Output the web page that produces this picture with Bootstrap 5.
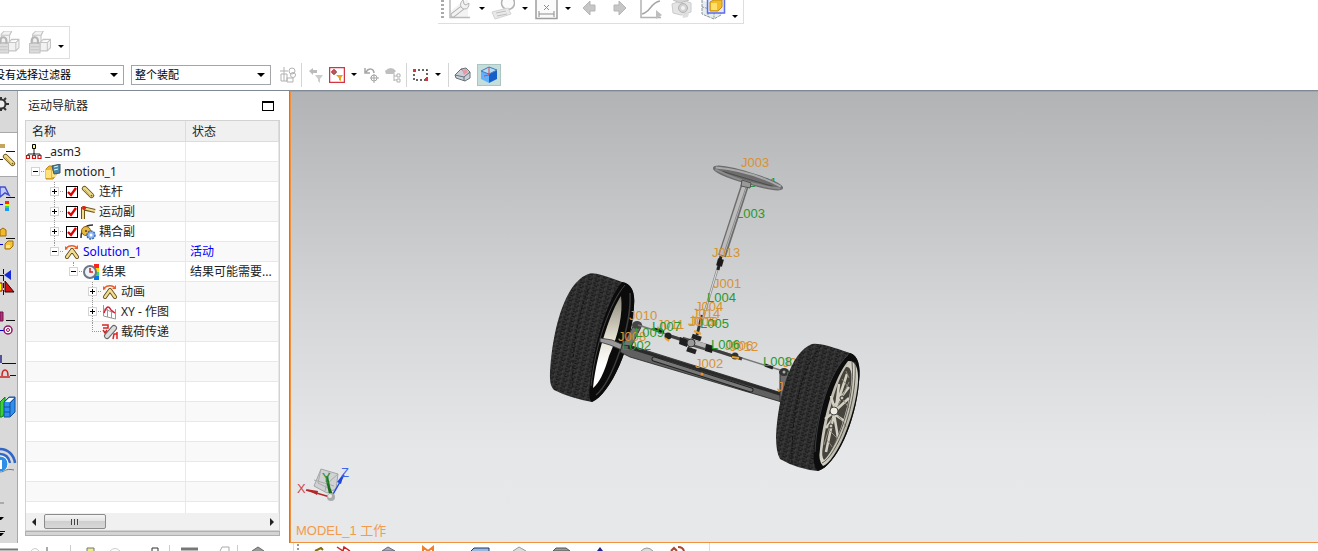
<!DOCTYPE html>
<html lang="zh-CN">
<head>
<meta charset="utf-8">
<meta name="viewport" content="width=device-width, initial-scale=1">
<title>运动导航器</title>
<link rel="stylesheet" href="https://cdn.jsdelivr.net/npm/bootstrap@5.3.0/dist/css/bootstrap.min.css">
<style>
body{font:12px/18px "Noto Sans","Noto Sans CJK SC",sans-serif;color:#1e1e1e;background:#fff}
svg{display:block;flex:none}
button{border:0;padding:0;background:none;color:inherit;flex:none}
.tbtn{width:26px;height:24px;display:flex;justify-content:center;align-items:flex-start}
.dim{opacity:.75}
.drop{width:17px;height:16px;display:flex;align-items:center;justify-content:center}
.drop::after{content:"";border:3px solid transparent;border-top:3px solid #000;border-bottom:0}
.topbar{height:24px;width:306px;margin-left:438px;border:solid #dedede;border-width:0 1px 1px 0}
.runset{gap:5px}
.grip{width:10px;height:20px;padding-left:3px}
.grip::before{content:"";display:block;height:20px;width:3px;background:repeating-linear-gradient(#aaa 0 2px,#fff 2px 4px)}
.assybar{width:70px;height:33px;margin-top:2px;border:solid #dedede;border-width:1px 1px 1px 0}
.selbar{height:31px}
.selbar .form-select{font:inherit;font-size:11px;line-height:18px;height:20px;padding:0 20px 0 3px;border:1px solid #a3a5ab;border-radius:0;color:#000;background-position:right 5px center;background-size:8px 4px;background-image:url("data:image/svg+xml,%3Csvg xmlns='http://www.w3.org/2000/svg' viewBox='0 0 8 4'%3E%3Cpath d='M0 0h8L4 4z'/%3E%3C/svg%3E")}
.selbar .filter{width:142px;margin-left:-18px;margin-right:7px;padding-left:11px}
.scope{width:140px;margin-right:6px}
.sbtn{width:21px;height:22px;display:flex;align-items:center;justify-content:center}
.sbtn.on{width:24px;background:#c6dedb;border:1px solid #a9c6c2}
.selbar .drop{width:14px}
.vsep{width:7px;height:24px;padding-left:3px;flex:none}
.vsep::before{content:"";display:block;width:1px;height:24px;background:#d5d5d5}
.workarea{border-top:1px solid #7f8995;min-height:0}
.rail{width:18px;background:#d9d9d9;border-right:1px solid #a8a8a8;overflow:hidden}
.rail button{height:42px;display:flex;align-items:center}
.rail .first{height:41px;align-items:flex-start;padding-top:5px}
.rail .now{height:45px;width:18px;background:#fff;border:solid #a8a8a8;border-width:1px 0}
.rail .tall{height:62px}
.navpane{width:272px;padding:0 10px 7px 7px}
.ntitle{height:29px;padding:1px 6px 0 3px}
.winbox{width:12px;height:10px;border:1px solid #000;border-top-width:2px}
.tree{border:1px solid #d2d2d2;min-height:0;overflow:hidden}
.tree table{table-layout:fixed;width:100%;border-collapse:separate;border-spacing:0;line-height:18px}
.tree th{height:21px;background:#f0f0f0;font-weight:400;padding:1px 6px 0;border:solid #dcdcdc;border-width:0 1px 1px 0}
.tree td{height:20px;padding:0 4px;border:solid #e8e8e8;border-width:0 1px 1px 0;white-space:nowrap;overflow:hidden}
.tree td:first-child{padding:0}
.tree tr:nth-child(even) td{background:#f9f9f9}
.node{display:flex;align-items:center;height:19px}
.node svg{margin-right:3px}
.joint{width:19px;height:19px;position:relative;display:flex;align-items:center;justify-content:center;flex:none}
.joint::before{content:"";position:absolute;left:9px;top:0;bottom:0;border-left:1px dotted #999}
.joint.end::before{bottom:9px}
.joint.root::before{display:none}
.joint::after{content:"";position:absolute;left:9px;right:1px;top:9px;border-top:1px dotted #999}
.l1{margin-left:19px}.l2{margin-left:38px}.l3{margin-left:57px}
.tog{width:9px;height:9px;border:1px solid #d4d4d4;position:relative;z-index:1;background:linear-gradient(#000,#000) center/5px 1px no-repeat,#fff}
.tog.plus{background:linear-gradient(#000,#000) center/5px 1px no-repeat,linear-gradient(#000,#000) center/1px 5px no-repeat,#fff}
.node .form-check-input{width:12px;height:12px;margin:0 2px;border:1px solid #000;border-radius:0;background-color:#fff;flex:none;background-size:12px}
.node .form-check-input:checked{background-image:url("data:image/svg+xml,%3Csvg xmlns='http://www.w3.org/2000/svg' viewBox='0 0 12 12'%3E%3Cpath d='M2 6l3 3 5-7' fill='none' stroke='%23e00000' stroke-width='2.4'/%3E%3C/svg%3E")}
.live{color:#00f}
.hscroll{height:17px;background:#f0f0f0;flex:none;padding:0 5px 0 6px}
.thumb{width:62px;height:15px;margin-left:8px;border:1px solid #8b8b8b;border-radius:2px;background:linear-gradient(#f5f5f5,#e2e2e2 50%,#cfcfcf 50%,#d8d8d8);display:flex;justify-content:center;align-items:center}
.thumb::before{content:"";width:8px;height:6px;background:repeating-linear-gradient(90deg,#444 0 1px,#ddd 1px 3px)}
.larr,.rarr{width:4px;height:8px;border:4px solid transparent;border-right-color:#222;border-left:0}
.rarr{border:4px solid transparent;border-left-color:#222;border-right:0}
.splitbar{height:5px;background:#d4d4d4;border:1px solid #b0b0b0;flex:none}
.scene{min-width:0;border:1px solid #f2913d;border-right:0;box-shadow:-1px 0 #7f8995;background:linear-gradient(#b2b3b5,#d5d7d8 50%,#e5e7e9 80%,#e6e8ea)}
.scene svg{width:100%;height:100%}
.scene text{font-family:"Liberation Sans","Noto Sans CJK SC",sans-serif;font-size:13px}
.jt{fill:#d8922f}.lk{fill:#279a2c}.ttl{fill:#f49a4b}
.lowbar{height:8px;overflow:hidden;flex:none}
.lowleft{width:294px;border-right:1px solid #dedede}
.lowright{width:416px;border-right:1px solid #dedede}
</style>
<script src="https://cdn.jsdelivr.net/npm/bootstrap@5.3.0/dist/js/bootstrap.bundle.min.js"></script>
</head>
<body class="vh-100 d-flex flex-column overflow-hidden">
<svg width="0" height="0" class="position-absolute" aria-hidden="true">
 <defs>
  <symbol id="cubes" viewBox="1 0 22 22"><g stroke="#c4c4c4" fill="#f2f2f2"><path d="M5 3l3-3h7l-2 4v7H5z"/><path d="M5 4h8l2-4M12 11l3-3h7v8l-3 3h-7zM12 11h7l3-3M19 11v8"/><path d="M2 12h10v9H2z" fill="#dcdcdc"/><path d="M4 12V9a3 3 0 0 1 6 0v3" fill="none" stroke="#b4b4b4" stroke-width="2"/><path d="M3 15h8M3 18h8"/></g></symbol>
  <symbol id="rod" viewBox="0 0 16 16"><path d="M4 4l8 8" stroke="#6b5216" stroke-width="6" stroke-linecap="round"/><path d="M4 4l8 8" stroke="#eddc8e" stroke-width="4" stroke-linecap="round"/><path d="M4 5l6 7" stroke="#b79537"/><circle cx="12" cy="12" r="1" fill="#7a5d1a"/></symbol>
  <symbol id="arm" viewBox="0 0 16 16"><path d="M3 13l5-7M8 6l5 7" stroke="#5d4712" stroke-width="4" stroke-linecap="round"/><path d="M3 13l5-7M8 6l5 7" stroke="#f0dc92" stroke-width="2.400" stroke-linecap="round"/><path d="M2 4Q7 0 12 3" fill="none" stroke="#ee5a28" stroke-width="1.500"/><path d="M14 1v4h-4zM1 2v4l3-1z" fill="#ee5a28"/></symbol>
 </defs>
</svg>

<header class="flex-shrink-0">
 <div class="topbar d-flex" role="toolbar" aria-label="运动">
  <span class="grip"></span>
  <button class="tbtn dim" aria-label="环境"><svg width="22" height="20"><path d="M2 11l8-7 9-5v18H2z" fill="#f0f0f0"/><path d="M1 0v17.500h20" fill="none" stroke="#a5a5a5" stroke-width="1.500"/><path d="M4 15l9-7" stroke="#999" stroke-width="5" stroke-linecap="round"/><path d="M4 15l9-7" stroke="#eee" stroke-width="3" stroke-linecap="round"/><path d="M14 0c-4 3-3 9 2 9q4 0 4-6l-3 2-2-1z" fill="#eee" stroke="#999"/></svg></button>
  <button class="drop" aria-label="更多"></button>
  <button class="tbtn dim" aria-label="标记"><svg width="24" height="20"><circle cx="17" cy="3" r="6.500" fill="#fafafa" stroke="#999" stroke-width="1.500"/><path d="M1 12l16-4 3 6-16 5z" fill="#e2e2e2" stroke="#c4c4c4"/><path d="M5 13l10-2M6 16l10-2" stroke="#aaa"/></svg></button>
  <button class="drop" aria-label="更多"></button>
  <button class="tbtn" aria-label="测量"><svg width="23" height="20"><path d="M1 0v18.500h21V0" fill="#fafafa" stroke="#9d9d9d" stroke-width="1.500"/><path d="M4 14h15M4 11v6M19 11v6M9 5l5 5M14 5l-5 5" stroke="#8d8d8d"/></svg></button>
  <button class="drop" aria-label="更多"></button>
  <span class="d-flex runset">
  <button class="tbtn" aria-label="后退"><svg width="14" height="16"><path d="M1 8l7-7v4h5v6H8v4z" fill="#c6c6c6" stroke="#b5b5b5"/></svg></button>
  <button class="tbtn" aria-label="前进"><svg width="14" height="16"><path d="M13 8L6 1v4H1v6h5v4z" fill="#c6c6c6" stroke="#b5b5b5"/></svg></button>
  <button class="tbtn dim" aria-label="图表"><svg width="23" height="20"><path d="M1 0v17.500h20" fill="none" stroke="#999" stroke-width="1.500"/><path d="M2 14C11 12 10 3 20 1" fill="none" stroke="#888" stroke-width="1.500"/><path d="M16 10l6 5-6 4z" fill="#aaa"/></svg></button>
  <button class="tbtn dim" aria-label="照相"><svg width="22" height="20"><path d="M1 4l11-4 8 3v9l-10 3-8-2z" fill="#dcdcdc" stroke="#bbb"/><path d="M2 0l7 3 9-3" fill="#c9c9c9" stroke="#aaa"/><circle cx="12" cy="8" r="4.500" fill="#c4c4c4" stroke="#999"/><circle cx="12" cy="8" r="2" fill="#eee"/><path d="M11 14l7-1-1 4-5 1z" fill="#d5d5d5"/></svg></button>
  <button class="tbtn" aria-label="显示部件"><svg width="25" height="21"><path d="M1 0v14l12 5 7-4V8" fill="#e6edef" stroke="#8b979b" stroke-dasharray="3 1"/><path d="M1 7l12 3v9M7 4v13" fill="none" stroke="#8b979b" stroke-dasharray="2 1"/><path d="M6.500 0v13h17V0" fill="#e4e8f8" stroke="#5b6ee8" stroke-width="1.500"/><path d="M9 2l4-2h8v7l-4 4H9z" fill="#f3bc2b" stroke="#c58b0f"/><path d="M10 3h6v7h-6z" fill="#ffe06a"/></svg></button>
  </span>
  <button class="drop mt-1 pt-2" aria-label="更多"></button>
 </div>
 <div class="assybar d-flex align-items-center" role="toolbar" aria-label="装配">
  <button aria-label="约束"><svg width="20" height="23" viewBox="3 0 20 23"><use href="#cubes" width="23" height="23"/></svg></button>
  <button class="ms-2" aria-label="解除约束"><svg width="24" height="23"><use href="#cubes" width="24" height="23"/></svg></button>
  <button class="drop mt-2" aria-label="更多"></button>
 </div>
 <div class="selbar d-flex align-items-center" role="toolbar" aria-label="选择">
  <select class="form-select filter flex-shrink-0" aria-label="选择过滤器"><option>没有选择过滤器</option></select>
  <select class="form-select scope flex-shrink-0" aria-label="选择范围"><option>整个装配</option></select>
  <button class="sbtn dim" aria-label="定向"><svg width="18" height="18" fill="none" stroke="#999"><path d="M2 8h6v7H2zM5 1v14M1 5h8M8 12h6v4H8z"/><circle cx="13" cy="5" r="3"/><circle cx="14" cy="9" r="2.500"/></svg></button>
  <span class="vsep"></span>
  <button class="sbtn" aria-label="重置过滤"><svg width="16" height="16"><path d="M1 4l4-3v2h4v3H5v2z" fill="#bbb"/><path d="M7 8h8l-3 4v4l-2-2v-2z" fill="#ccc"/></svg></button>
  <button class="sbtn" aria-label="点过滤"><svg width="16" height="16"><path d="M.5.5h15v15H.5z" fill="#fff" stroke="#d23345" stroke-width="1.500"/><circle cx="5" cy="5" r="2" fill="none" stroke="#c22"/><path d="M5 2v6M2 5h6" stroke="#833"/><path d="M7 8h7l-2 3v3l-2-1v-2z" fill="#e9a51a"/></svg></button>
  <button class="drop" aria-label="更多"></button>
  <button class="sbtn dim" aria-label="撤消"><svg width="16" height="16" fill="none" stroke="#888"><path d="M2 5c3-5 8-3 8 1M1 1v5h5" stroke-width="1.500"/><circle cx="10" cy="11" r="3"/><path d="M10 7v9M6 11h9"/></svg></button>
  <button class="sbtn dim" aria-label="查找"><svg width="18" height="16"><path d="M1 4q6-6 11 0l-3 3H2z" fill="#aaa"/><path d="M10 6v8M10 9h3M10 13h3M13 7h3v3h-3zM13 12h3v3h-3z" fill="none" stroke="#999"/></svg></button>
  <span class="vsep"></span>
  <button class="sbtn" aria-label="矩形选择"><svg width="17" height="14"><path d="M2 2h13v10H2z" fill="none" stroke="#333" stroke-dasharray="2 2" stroke-width="1.500"/><path d="M1 1h3v3H1zM13 10h3v3h-3z" fill="#d33"/></svg></button>
  <button class="drop" aria-label="更多"></button>
  <span class="vsep"></span>
  <button class="sbtn" aria-label="着色"><svg width="17" height="15"><path d="M1 8l6-6 5-1 4 4v6l-5 3-9-3z" fill="#c9d0d8" stroke="#66707c"/><path d="M1 8l9 2 6-5M10 10v4M7 2l4 3" fill="none" stroke="#66707c"/><path d="M8 3l4-1 2 3-4 3z" fill="#e59aa2"/></svg></button>
  <button class="sbtn on ms-1" aria-label="立方体视图" aria-pressed="true"><svg width="18" height="18"><path d="M1 5l8 3v9l-8-4z" fill="#5fb0ff"/><path d="M9 8l8-4v9l-8 4z" fill="#1560c8"/><path d="M1 5l8-4 8 3-8 4z" fill="#b5dbf8" stroke="#3e79b9"/><path d="M9 1v8M9 9l-5 1" stroke="#e04444"/></svg></button>
 </div>
</header>

<main class="workarea flex-grow-1 d-flex">
 <nav class="rail flex-shrink-0 d-flex flex-column align-items-start" aria-label="资源条">
  <button class="first" aria-label="设置"><svg width="10" height="16"><circle cx="1" cy="8" r="4.500" fill="#eee" stroke="#333" stroke-width="2"/><path d="M4 4l2-2M6 8h3M4 12l2 2M1 1v3M1 12v3" stroke="#333" stroke-width="2"/></svg></button>
  <button class="now" aria-label="运动导航器"><svg width="17" height="26"><path d="M0 3h5M0 5h5" stroke="#b28828" stroke-width="1.500"/><path d="M6 9.500h9" stroke="#111"/><path d="M0 17.500h3" stroke="#00c"/><use href="#rod" x="2" y="11" width="14" height="14"/></svg></button>
  <button aria-label="部件"><svg width="17" height="28"><path d="M0 3h5l4 8-4-2-5 4z" fill="#c3cbf7" stroke="#4450d0" stroke-width="1.500"/><path d="M6 13.500h9" stroke="#111"/><path d="M0 20.500h3" stroke="#00c"/><path d="M5 17h4v3H5z" fill="#f22"/><path d="M5 20h4v2H5z" fill="#fe0"/><path d="M5 22h4v2H5z" fill="#3d3"/><path d="M5 24h4v3H5z" fill="#19f"/></svg></button>
  <button aria-label="装配"><svg width="17" height="28"><path d="M0 4l3-2 3 2v6H0z" fill="#f3b92a" stroke="#9b6c08"/><path d="M6 12.500h9" stroke="#111"/><path d="M0 18.500h3" stroke="#00c"/><path d="M5 18l3-3h5v5l-3 3H5z" fill="#f6c23a" stroke="#9b6c08"/><path d="M6 19h4v3H6z" fill="#ffe584"/></svg></button>
  <button aria-label="约束"><svg width="17" height="26"><path d="M3.500 0v26" stroke="#111" stroke-dasharray="5 2"/><path d="M0 6.500h4" stroke="#00c"/><path d="M4 6l7-5v10z" fill="#1529d8"/><path d="M-1 14h3v8h-3z" fill="#ff0" stroke="#a00"/><path d="M5 12v11h9z" fill="#d51212" stroke="#300"/></svg></button>
  <button aria-label="重用"><svg width="17" height="28"><path d="M0 2h3v9H0z" fill="#b72f7e" stroke="#701347"/><path d="M6 10.500h9" stroke="#111"/><path d="M0 20.500h4" stroke="#00c"/><circle cx="8" cy="20" r="4" fill="#fff" stroke="#8f1260" stroke-width="1.500"/><circle cx="8" cy="20" r="1.500" fill="none" stroke="#8f1260"/></svg></button>
  <button aria-label="仿真"><svg width="17" height="28"><path d="M1 3v8" stroke="#53539a" stroke-width="2"/><path d="M2 11.500h14M10 23.500h6" stroke="#111"/><path d="M0 25h10M2 24c0-8 6-8 6 0" stroke="#c22" fill="none" stroke-width="1.500"/></svg></button>
  <button aria-label="书库"><svg width="17" height="24"><path d="M0 6l5-5v16l-3 4H0z" fill="#39d23a" stroke="#187a1a"/><path d="M4 6l5-5h6v15l-5 5H4z" fill="#2f8ff0" stroke="#124e9b"/><path d="M5 6l4-4h5l-4 4z" fill="#f4f8ff"/><path d="M10 7l5-5M10 7v13M4 11h6M4 16h6" stroke="#124e9b"/></svg></button>
  <button class="tall" aria-label="信息"><svg width="17" height="28"><path d="M0 3c8 0 14 6 15 14M0 8c6 0 9 4 10 9" fill="none" stroke="#2f66c8" stroke-width="2.500"/><circle cx="0" cy="18" r="8" fill="#2f8fe8" stroke="#fff"/><path d="M1 14v9" stroke="#fff" stroke-width="2"/><path d="M0 26c5 0 5-4 14-2" fill="none" stroke="#777"/></svg></button>
  <svg width="17" height="62" viewBox="0 5 17 62"><path d="M0 0h4M0 4h5M0 17h4" stroke="#aaa" stroke-width="2"/><path d="M0 31h4l-3 3H0zM0 47h4l-3 3H0z"/><path d="M0 45.500h5" stroke="#111"/></svg>
 </nav>

 <section class="navpane flex-shrink-0 d-flex flex-column">
  <div class="ntitle d-flex align-items-center justify-content-between flex-shrink-0"><span>运动导航器</span><button class="winbox" aria-label="最大化"></button></div>
  <div class="tree flex-grow-1 d-flex flex-column">
   <div class="flex-grow-1 overflow-hidden">
   <table>
    <colgroup><col style="width:160px"><col></colgroup>
    <thead><tr><th scope="col">名称</th><th scope="col">状态</th></tr></thead>
    <tbody>
     <tr><td><div class="node"><svg width="16" height="16"><path d="M8 5v5M2 12v-2h12v2M8 9v3" fill="none" stroke="#222"/><path d="M6.500.5h3v4h-3z" fill="#ff6" stroke="#000"/><path d="M.5 11.500h3v3h-3zM6.500 11.500h3v3h-3zM12 11.500h3v3h-3z" fill="#fff" stroke="#c11" stroke-width="1.200"/></svg>_asm3</div></td><td></td></tr>
     <tr><td><div class="node"><span class="joint root"><button class="tog" aria-label="折叠"></button></span><svg width="16" height="16"><path d="M1 5l3-3h7v9l-3 4H1z" fill="#f0b62c" stroke="#b98a1c"/><path d="M1 6h5v8H1zM7 7h4v6H7z" fill="#ffe17a"/><path d="M7 2l8-2v9l-6 1z" fill="#4b87a8" stroke="#456"/><path d="M9 3l4-1M9 6l4-1" stroke="#dff"/></svg>motion_1</div></td><td></td></tr>
     <tr><td><div class="node"><span class="joint l1"><button class="tog plus" aria-label="展开"></button></span><input class="form-check-input" type="checkbox" id="c1" checked><svg width="16" height="16"><use href="#rod" x="1" y="1" width="14" height="14"/></svg><label for="c1">连杆</label></div></td><td></td></tr>
     <tr><td><div class="node"><span class="joint l1"><button class="tog plus" aria-label="展开"></button></span><input class="form-check-input" type="checkbox" id="c2" checked><svg width="16" height="16"><path d="M3 3v12M2 4l13 3" stroke="#6b5216" stroke-width="4"/><path d="M3 3v12M3 4l12 3" stroke="#efdb93" stroke-width="2"/><circle cx="4" cy="4" r="2" fill="#d21"/></svg><label for="c2">运动副</label></div></td><td></td></tr>
     <tr><td><div class="node"><span class="joint l1"><button class="tog plus" aria-label="展开"></button></span><input class="form-check-input" type="checkbox" id="c3" checked><svg width="16" height="16"><path d="M1 14c0-7 2-13 12-13" fill="none" stroke="#333" stroke-width="1.500"/><circle cx="6" cy="7" r="4.500" fill="#e9b93d" stroke="#8a6416"/><circle cx="6" cy="7" r="1" fill="#633"/><circle cx="11" cy="11" r="4" fill="#8bb4ee" stroke="#3b6cb5" stroke-dasharray="2 1" stroke-width="1.500"/><circle cx="11" cy="11" r="1.500" fill="#fff"/></svg><label for="c3">耦合副</label></div></td><td></td></tr>
     <tr class="live"><td><div class="node"><span class="joint l1 end"><button class="tog" aria-label="折叠"></button></span><svg width="16" height="16"><use href="#arm"/></svg>Solution_1</div></td><td>活动</td></tr>
     <tr><td><div class="node"><span class="joint l2 end"><button class="tog" aria-label="折叠"></button></span><svg width="16" height="16"><path d="M11 0h5v5h-5z" fill="#f22"/><path d="M11 4h5v4h-5z" fill="#fd0"/><path d="M11 8h5v4h-5z" fill="#3d6"/><path d="M11 12h5v4h-5z" fill="#07e"/><circle cx="7" cy="8" r="6" fill="#eef2f7" stroke="#6b7686" stroke-width="2"/><path d="M7 4v4h3" fill="none" stroke="#c22" stroke-width="1.500"/></svg>结果</div></td><td>结果可能需要...</td></tr>
     <tr><td><div class="node"><span class="joint l3"><button class="tog plus" aria-label="展开"></button></span><svg width="16" height="16"><use href="#arm"/></svg>动画</div></td><td></td></tr>
     <tr><td><div class="node"><span class="joint l3"><button class="tog plus" aria-label="展开"></button></span><svg width="16" height="16"><path d="M1.500 1v11l12 3V5M2 5l11 4M5.500 5v8M9.500 6v8" fill="none" stroke="#999"/><path d="M2 9c3-8 5-7 7-3l4 3" fill="none" stroke="#d8203a" stroke-width="1.500"/></svg>XY - 作图</div></td><td></td></tr>
     <tr><td><div class="node"><span class="joint l3 end"></span><svg width="16" height="16"><path d="M5 12l7-8" stroke="#666" stroke-width="6" stroke-linecap="round"/><path d="M5 12l7-8" stroke="#ddd" stroke-width="4" stroke-linecap="round" stroke-dasharray="2 1"/><path d="M0 1h6v3H1M1 6l2 3 2-3M15 8v7M11 15l1-5h3" stroke="#d22" stroke-width="1.500" fill="none"/></svg>载荷传递</div></td><td></td></tr>
     <tr><td></td><td></td></tr><tr><td></td><td></td></tr><tr><td></td><td></td></tr><tr><td></td><td></td></tr><tr><td></td><td></td></tr><tr><td></td><td></td></tr><tr><td></td><td></td></tr><tr><td></td><td></td></tr><tr><td></td><td></td></tr>
    </tbody>
   </table>
   </div>
   <div class="hscroll d-flex align-items-center"><button class="larr" aria-label="向左滚动"></button><span class="thumb"></span><button class="rarr ms-auto" aria-label="向右滚动"></button></div>
  </div>
  <div class="splitbar"></div>
 </section>

 <section class="scene flex-grow-1" aria-label="图形窗口">
 <svg viewBox="291 92 1027 450" preserveAspectRatio="xMinYMax meet">
  <defs>
   <pattern id="tread" width="7" height="5" patternUnits="userSpaceOnUse" patternTransform="rotate(14)"><rect width="7" height="5" fill="#353535"/><path d="M0 1h3M1 3l4 1M5 1v2" stroke="#121212"/><path d="M5 4h1" stroke="#484848"/></pattern>
   <linearGradient id="hub" x1="0" y1="0" x2="0" y2="1"><stop offset="0" stop-color="#8c897c"/><stop offset=".45" stop-color="#e2dfd1"/><stop offset=".75" stop-color="#fff"/></linearGradient>
   <linearGradient id="metal" x1="0" y1="0" x2="1" y2="1"><stop offset="0" stop-color="#8e8b80"/><stop offset=".5" stop-color="#d9d6ca"/><stop offset="1" stop-color="#77746a"/></linearGradient>
  </defs>

  <!-- left wheel -->
  <path d="M550 378C551 338 563 281 590 273.500Q596 272 622 282Q636 285 634 306C632 345 611 394 592 402Q570 398 554 390Q550 386 550 378z" fill="url(#tread)"/>
  <path d="M622 282Q636 284 634 306C632 345 611 394 592 402Q588 400 590 384C594 345 606 302 622 282z" fill="#0b0b0b"/>
  <path d="M625 285C610 302 595 345 591 386" fill="none" stroke="#444"/>
  <path d="M630 293C632 325 612 382 596 395" fill="none" stroke="#3d3d3d" stroke-width="1.500"/>
  <path d="M621 296C612 309 597 350 593 388Q602 381 609 356Q624 322 621 296z" fill="url(#hub)"/>
  <path d="M588 290C578 315 571 350 573 390" fill="none" stroke="#151515" stroke-dasharray="3 3"/>

  <!-- axle -->
  <path d="M600 338l12 2 14 6-2 5-14-6-10-3z" fill="#999" stroke="#333" stroke-width=".8"/>
  <path d="M634 325h8l-12 24-8-3z" fill="#747474" stroke="#333"/>
  <ellipse cx="637" cy="325" rx="5" ry="4" fill="#444"/>
  <path d="M622 345l10 1 153 48v9l-155-46-10-5z" fill="#606060" stroke="#222" stroke-width=".8"/>
  <path d="M628 347l155 48" stroke="#2a2a2a" stroke-width="3"/>
  <path d="M654 359l97 31" stroke="#222" stroke-width="5" stroke-linecap="round"/>
  <path d="M654 359l97 31" stroke="#777" stroke-width="3" stroke-linecap="round"/>
  <path d="M664 360l80 24" stroke="#333"/>
  <path d="M780 371h8v31h-8z" fill="#6b6b6b" stroke="#333"/>
  <ellipse cx="784" cy="372" rx="5" ry="4" fill="#333"/><circle cx="784" cy="372" r="1.500" fill="#aaa"/>

  <!-- steering rack -->
  <path d="M638 325l142 45" stroke="#777" stroke-width="1.500"/>
  <path d="M667 335l75 24" stroke="#3e3e3e" stroke-width="3"/>
  <path d="M682 340l30 9" stroke="#4e4e4e" stroke-width="7"/>
  <path d="M693 342l13 4" stroke="#b6b6b6" stroke-width="4"/>
  <path d="M680 337l8 3-1 7-8-3zM706 344l7 2-1 7-7-2z" fill="#1f1f1f"/>
  <circle cx="668" cy="336" r="3.500" fill="#222"/><circle cx="735" cy="356" r="3.500" fill="#333"/>
  <path d="M765 365l8 3M664 332l-10-3" stroke="#222" stroke-width="3"/>
  <path d="M687 349l9 3" stroke="#222" stroke-width="5"/><path d="M692 336l9 3" stroke="#222" stroke-width="5"/>
  <circle cx="691" cy="343" r="4" fill="#999" stroke="#333"/>
  <path d="M697 335l5-20" stroke="#333" stroke-width="3"/>
  <path d="M665 338l4 3M694 331l7 3M732 357l7 1" stroke="#f0a020" stroke-width="2"/>
  <circle cx="702" cy="374" r="1.500" fill="#f09020"/>

  <!-- labels behind the column -->
  <text class="lk" x="748" y="187">L001</text><text class="lk" x="736" y="218">L003</text>
  <!-- steering column -->
  <path d="M701 325l17-58" stroke="#8c8c8c" stroke-width="2.500"/><path d="M701 325l17-58" stroke="#ddd"/>
  <path d="M718 270l3-14" stroke="#222" stroke-width="3"/><path d="M719 266l2-7" stroke="#1b1b1b" stroke-width="6"/>
  <path d="M722 256l24-74" stroke="#6c6c6c" stroke-width="8"/><path d="M722 255l24-73" stroke="#bcbcbc" stroke-width="5"/>
  <path d="M724 253l24-72" stroke="#8c8c8c"/>
  <g transform="rotate(16.500 748 178)"><ellipse cx="748" cy="178" rx="34" ry="3.500" fill="#707070" stroke="#6c6c6c" stroke-width="5"/><path d="M714 177q34-7 68 0" stroke="#aaa" stroke-width="2" fill="none"/><path d="M722 179h52" stroke="#4c4c4c"/><path d="M714 179q34 6 68 0" stroke="#8c8c8c" stroke-width="2" fill="none"/></g>
  <path d="M742 180l9 3-1 5-9-2z" fill="#999" stroke="#444" stroke-width=".8"/>

  <g class="jt">
   <text x="741" y="167">J003</text><text x="712" y="257">J013</text><text x="713" y="288">J001</text>
   <text x="695" y="311">J004</text><text x="692" y="318">J014</text><text x="688" y="326">J005</text><text x="690" y="326">J016</text>
   <text x="629" y="320">J010</text><text x="657" y="329">J011</text><text x="618" y="341">J008</text>
   <text x="695" y="368">J002</text><text x="725" y="350">J006</text><text x="730" y="351">J012</text>
   <text x="783" y="367">J007</text><text x="777" y="391">J009</text>
  </g>
  <g class="lk">
   <text x="707" y="302">L004</text><text x="700" y="328">L005</text><text x="635" y="337">L009</text><text x="652" y="331">L007</text>
   <text x="622" y="350">L002</text><text x="711" y="349">L006</text><text x="763" y="366">L008</text>
  </g>
  <path d="M788 372v14" stroke="#279a2c" stroke-width="1.500"/>

  <!-- right wheel -->
  <path d="M776 437C778 397 790 352 812 344Q820 342 850 353Q862 357 859 382C856 422 836 466 818 471Q797 469 780 459Q776 452 776 437z" fill="url(#tread)"/>
  <path d="M850 353Q862 357 859 382C856 422 836 466 818 471Q812 466 814 450C817 412 829 372 850 353z" fill="#0d0d0d"/>
  <path d="M848 361Q859 360 858 382C855 418 836 461 823 466Q818 461 820 449C824 414 834 378 848 361z" fill="url(#metal)"/>
  <path d="M846 367Q853 366 851 384C848 415 832 455 824 460Q821 456 823 446C827 416 837 380 846 367z" fill="#45433c"/>
  <g fill="none" stroke="#d3d0c3" stroke-width="2.500"><path d="M835 410l12-36M835 410l-4-14M834 412l15-14M834 412l-9 7M834 414l12 8M834 414l-8 38M834 414l4 24M836 408l3-24M835 405l14-18M835 416l-9 12"/></g>
  <g fill="none" stroke="#8f8b7e"><path d="M838 406l11-24M832 418l-8 27M838 415l8 12M842 379l6 8M829 430l8 8M843 400l6 8M827 440l6 8M846 371l3 7"/></g>
  <circle cx="834" cy="411" r="4" fill="#eeecdf" stroke="#444"/><circle cx="842" cy="398" r="2" fill="#c9c6b8" stroke="#333"/><circle cx="831" cy="426" r="2" fill="#c9c6b8" stroke="#333"/>
  <path d="M855 362C858 405 836 457 822 463M852 362C856 400 836 450 824 458" fill="none" stroke="#44423b" stroke-width=".8"/>
  <path d="M848 355C830 371 817 412 815 452" fill="none" stroke="#3e3e3e"/>
  <path d="M821 346C804 365 791 405 792 464" fill="none" stroke="#151515" stroke-dasharray="4 2"/>

  <!-- view triad -->
  <path d="M321 469l17 5-2 15-9 4-13-7z" fill="#cfd1d2" stroke="#a3a5a7"/><path d="M321 469l-3 14 16 8M314 480l20 6M329 472l-4 19M338 474l-9 8" fill="none" stroke="#a9abad"/>
  <path d="M330 497l-24-7" stroke="#b32727" stroke-width="1.500"/><path d="M306 489l12 2-1 4z" fill="#b32727"/>
  <path d="M331 496l-4-20" stroke="#1c7a1f" stroke-width="2"/><path d="M326 480l7 14h-4z" fill="#1a681d"/>
  <path d="M332 496l12-21" stroke="#2046e0" stroke-width="1.500"/><path d="M344 473l-3 11-4-2z" fill="#2046e0"/>
  <circle cx="331" cy="497" r="4" fill="#aaa"/><circle cx="330" cy="496" r="2" fill="#e8e8e8"/>
  <text x="297" y="493" fill="#d04848">X</text><text x="322" y="482" fill="#2b8a30">Y</text><text x="341" y="477" fill="#3f66ea">Z</text>
  <text class="ttl" x="296" y="535">MODEL_1 工作</text>
 </svg>
 </section>
</main>

<footer class="lowbar d-flex">
 <div class="lowleft flex-shrink-0"><svg width="290" height="8" fill="none" stroke="#aaa"><path d="M0 6.500h18" stroke="#777" stroke-width="2"/><path d="M31 8q4-5 8 0M110 8q5-5 10 0" stroke="#ccc"/><path d="M47 4v4" stroke-width="2"/><path d="M70.500 2v6M169.500 2v6M237.500 2v6" stroke="#ccc"/><path d="M87 8V5h7v3" fill="#ee8" stroke="#777"/><path d="M152 8V5h6v3" stroke="#333"/><path d="M181 6h17" stroke="#777" stroke-width="3"/><path d="M220 8l2-4h7v4"/><path d="M252 8l6-4 6 4" fill="#999" stroke="#666"/></svg></div>
 <div class="lowright flex-shrink-0"><svg width="412" height="8" fill="none"><path d="M4 1v7" stroke="#999" stroke-width="2" stroke-dasharray="2 2"/><path d="M21 8l6-3 2 2" stroke="#876b10" stroke-width="2"/><path d="M43 4l6 4 1-4 6 4" stroke="#c22" stroke-width="1.500"/><path d="M88 8l6-4 7 4z" fill="#aab" stroke="#667"/><path d="M129 8V4l5 4 5-4v4" stroke="#f08030" stroke-width="2"/><path d="M177 8l3-3h15v3" fill="#9bd" stroke="#236"/><path d="M219 8l6-4 7 4M347 8q6-6 12 0" fill="#ddd" stroke="#999"/><path d="M259 8l3-3h10l4 3z" fill="#999" stroke="#555"/><path d="M303 8l3-4 3 4z" fill="#228"/><path d="M377 8l3-3 3 3M384 4q5 0 6 4" stroke="#a43" stroke-width="2"/></svg></div>
</footer>
</body>
</html>
